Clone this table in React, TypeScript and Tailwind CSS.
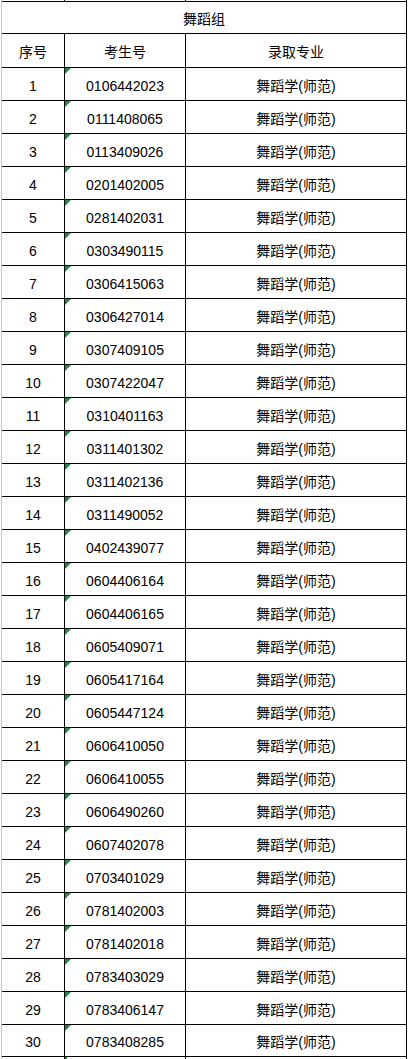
const rows: [number, string][] = [
  [1, "0106442023"],
  [2, "0111408065"],
  [3, "0113409026"],
  [4, "0201402005"],
  [5, "0281402031"],
  [6, "0303490115"],
  [7, "0306415063"],
  [8, "0306427014"],
  [9, "0307409105"],
  [10, "0307422047"],
  [11, "0310401163"],
  [12, "0311401302"],
  [13, "0311402136"],
  [14, "0311490052"],
  [15, "0402439077"],
  [16, "0604406164"],
  [17, "0604406165"],
  [18, "0605409071"],
  [19, "0605417164"],
  [20, "0605447124"],
  [21, "0606410050"],
  [22, "0606410055"],
  [23, "0606490260"],
  [24, "0607402078"],
  [25, "0703401029"],
  [26, "0781402003"],
  [27, "0781402018"],
  [28, "0783403029"],
  [29, "0783406147"],
  [30, "0783408285"],
];

const Flag = () => (
  <div className="absolute left-0 top-0 w-[6px] h-[6px] bg-[#1f8a3c] [clip-path:polygon(0_0,100%_0,0_100%)]" />
);

const App = () => {
  return (
    <div className="w-[408px] h-[1059px] bg-white overflow-hidden flex text-[14px] text-black font-['Liberation_Sans','Noto_Sans_CJK_SC',sans-serif]">
      <div className="w-[1px]" />
      <div className="w-[1px] bg-[#c4c4c4]" />
      <div className="w-[405px] flex flex-col">
        {/* stubs of the rows above */}
        <div className="h-[1px] flex">
          <div className="w-[62px]" />
          <div className="w-[1px] bg-black" />
          <div className="w-[120px]" />
          <div className="w-[1px] bg-black" />
          <div className="flex-1" />
          <div className="w-[1px] bg-black" />
        </div>

        <div className="border-t border-r border-black flex flex-col">
          <div className="h-[32px] border-b border-black flex items-center justify-center pt-[4px]">
            舞蹈组
          </div>
          <div className="h-[34px] border-b border-black flex">
            <div className="w-[63px] border-r border-black flex items-center justify-center pt-[4px]">序号</div>
            <div className="w-[121px] border-r border-black flex items-center justify-center pt-[4px]">考生号</div>
            <div className="flex-1 flex items-center justify-center pt-[4px]">录取专业</div>
          </div>
          {rows.map(([n, id], i) => (
            <div
              key={n}
              className={`${i === rows.length - 1 ? "h-[32px]" : "h-[33px]"} border-b border-black flex`}
            >
              <div className="w-[63px] border-r border-black flex items-center justify-center pt-[4px]">{n}</div>
              <div className="relative w-[121px] border-r border-black flex items-center justify-center pt-[4px]">
                <Flag />
                {id}
              </div>
              <div className="flex-1 flex items-center justify-center pt-[4px]">舞蹈学(师范)</div>
            </div>
          ))}
        </div>

        {/* stubs of the next row */}
        <div className="h-[2px] flex">
          <div className="w-[62px]" />
          <div className="w-[1px] bg-black" />
          <div className="relative w-[120px]">
            <div className="absolute left-0 top-0 w-[2px] h-[2px] bg-[#1f8a3c]" />
          </div>
          <div className="w-[1px] bg-black" />
          <div className="flex-1" />
          <div className="w-[1px] bg-black" />
        </div>
      </div>
    </div>
  );
};

export default App;
